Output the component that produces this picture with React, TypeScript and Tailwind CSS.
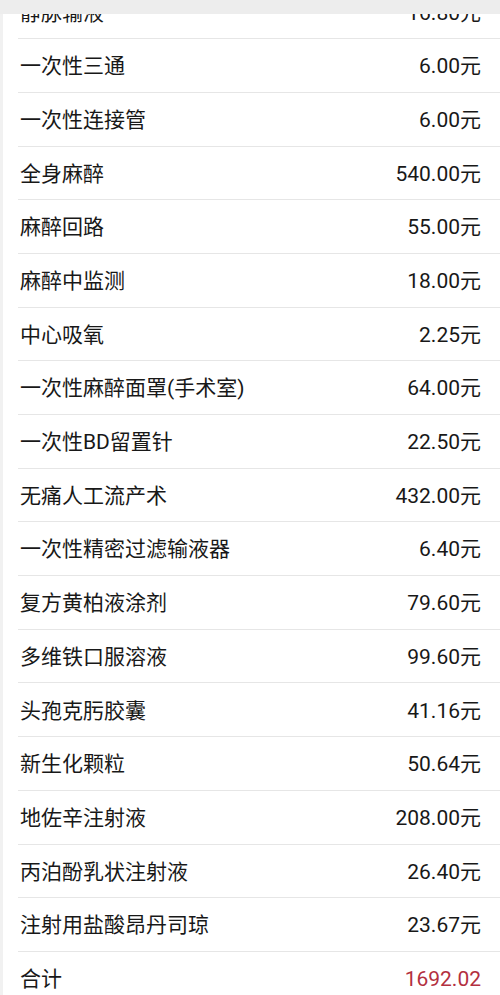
const items: [string, string][] = [
  ["静脉输液", "16.80元"],
  ["一次性三通", "6.00元"],
  ["一次性连接管", "6.00元"],
  ["全身麻醉", "540.00元"],
  ["麻醉回路", "55.00元"],
  ["麻醉中监测", "18.00元"],
  ["中心吸氧", "2.25元"],
  ["一次性麻醉面罩(手术室)", "64.00元"],
  ["一次性BD留置针", "22.50元"],
  ["无痛人工流产术", "432.00元"],
  ["一次性精密过滤输液器", "6.40元"],
  ["复方黄柏液涂剂", "79.60元"],
  ["多维铁口服溶液", "99.60元"],
  ["头孢克肟胶囊", "41.16元"],
  ["新生化颗粒", "50.64元"],
  ["地佐辛注射液", "208.00元"],
  ["丙泊酚乳状注射液", "26.40元"],
  ["注射用盐酸昂丹司琼", "23.67元"],
];

const App = () => {
  return (
    <div className="relative h-[995px] w-[500px] overflow-hidden bg-white font-['Roboto','Noto_Sans_CJK_SC',sans-serif] text-[#181818]">
      <div className="absolute left-0 top-0 z-10 h-[14px] w-full bg-[#ededed]" />
      <div className="flex h-full border-l-[3px] border-[#f1f1f1]">
        <div className="mt-[-14.5px] flex flex-1 flex-col pl-[15px]">
          {items.map(([name, price]) => (
            <div
              key={name}
              className="flex h-[53.7px] shrink-0 items-center justify-between border-b border-[#e6e6e6] pl-[2px] pr-[19px] pt-[3px] text-[21px]"
            >
              <span>{name}</span>
              <span>{price}</span>
            </div>
          ))}
          <div className="flex h-[53.7px] shrink-0 items-center justify-between pl-[2px] pr-[19px] pt-[2px] text-[21px]">
            <span>合计</span>
            <span className="text-[#b3303f]">1692.02</span>
          </div>
        </div>
      </div>
    </div>
  );
};

export default App;
